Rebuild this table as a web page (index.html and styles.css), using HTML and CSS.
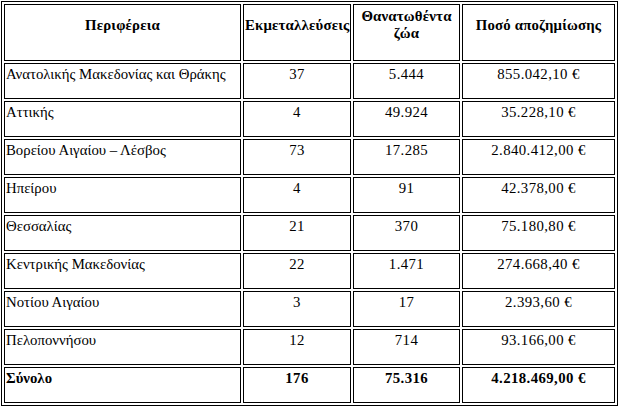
FILE: index.html
```html
<!DOCTYPE html>
<html lang="el">
<head>
<meta charset="utf-8">
<title>Αποζημιώσεις ανά Περιφέρεια</title>
<link rel="stylesheet" href="styles.css">
</head>
<body>
<table class="data">
  <thead>
    <tr class="head-row">
      <th class="c-region">Περιφέρεια</th>
      <th class="c-farms">Εκμεταλλεύσεις</th>
      <th class="c-animals">Θανατωθέντα<br>ζώα</th>
      <th class="c-amount">Ποσό αποζημίωσης</th>
    </tr>
  </thead>
  <tbody>
    <tr><td class="name">Ανατολικής Μακεδονίας και Θράκης</td><td>37</td><td>5.444</td><td>855.042,10 €</td></tr>
    <tr><td class="name">Αττικής</td><td>4</td><td>49.924</td><td>35.228,10 €</td></tr>
    <tr><td class="name">Βορείου Αιγαίου – Λέσβος</td><td>73</td><td>17.285</td><td>2.840.412,00 €</td></tr>
    <tr><td class="name">Ηπείρου</td><td>4</td><td>91</td><td>42.378,00 €</td></tr>
    <tr><td class="name">Θεσσαλίας</td><td>21</td><td>370</td><td>75.180,80 €</td></tr>
    <tr><td class="name">Κεντρικής Μακεδονίας</td><td>22</td><td>1.471</td><td>274.668,40 €</td></tr>
    <tr><td class="name">Νοτίου Αιγαίου</td><td>3</td><td>17</td><td>2.393,60 €</td></tr>
    <tr><td class="name">Πελοποννήσου</td><td>12</td><td>714</td><td>93.166,00 €</td></tr>
    <tr class="total"><td class="name">Σύνολο</td><td>176</td><td>75.316</td><td>4.218.469,00 €</td></tr>
  </tbody>
</table>
</body>
</html>
```

FILE: styles.css
```css
html, body {
  margin: 0;
  padding: 0;
  background: #fff;
}

body {
  font-family: "Liberation Serif", "Times New Roman", serif;
  font-size: 14.8px;
  color: #000;
}

.data {
  margin: 1px 0 0 1px;
  width: 617px;
  table-layout: fixed;
  border-collapse: separate;
  border-spacing: 2px;
  border: 1px solid #000;
}

.data th,
.data td {
  box-sizing: border-box;
  border: 1px solid #000;
  line-height: 17px;
  text-align: center;
  white-space: nowrap;
}

.data th {
  height: 57px;
  vertical-align: middle;
  padding: 2px 1px 17px;
  font-weight: bold;
  letter-spacing: 0.2px;
}

.data td {
  height: 36px;
  vertical-align: top;
  padding: 2px 1px 0;
  letter-spacing: 0.4px;
}

.data td.name {
  text-align: left;
  letter-spacing: 0;
}

.c-region { width: 237px; }
.c-farms { width: 108px; }
.c-animals { width: 107px; }
.c-amount { width: 153px; }

.total td {
  font-weight: bold;
}
```
